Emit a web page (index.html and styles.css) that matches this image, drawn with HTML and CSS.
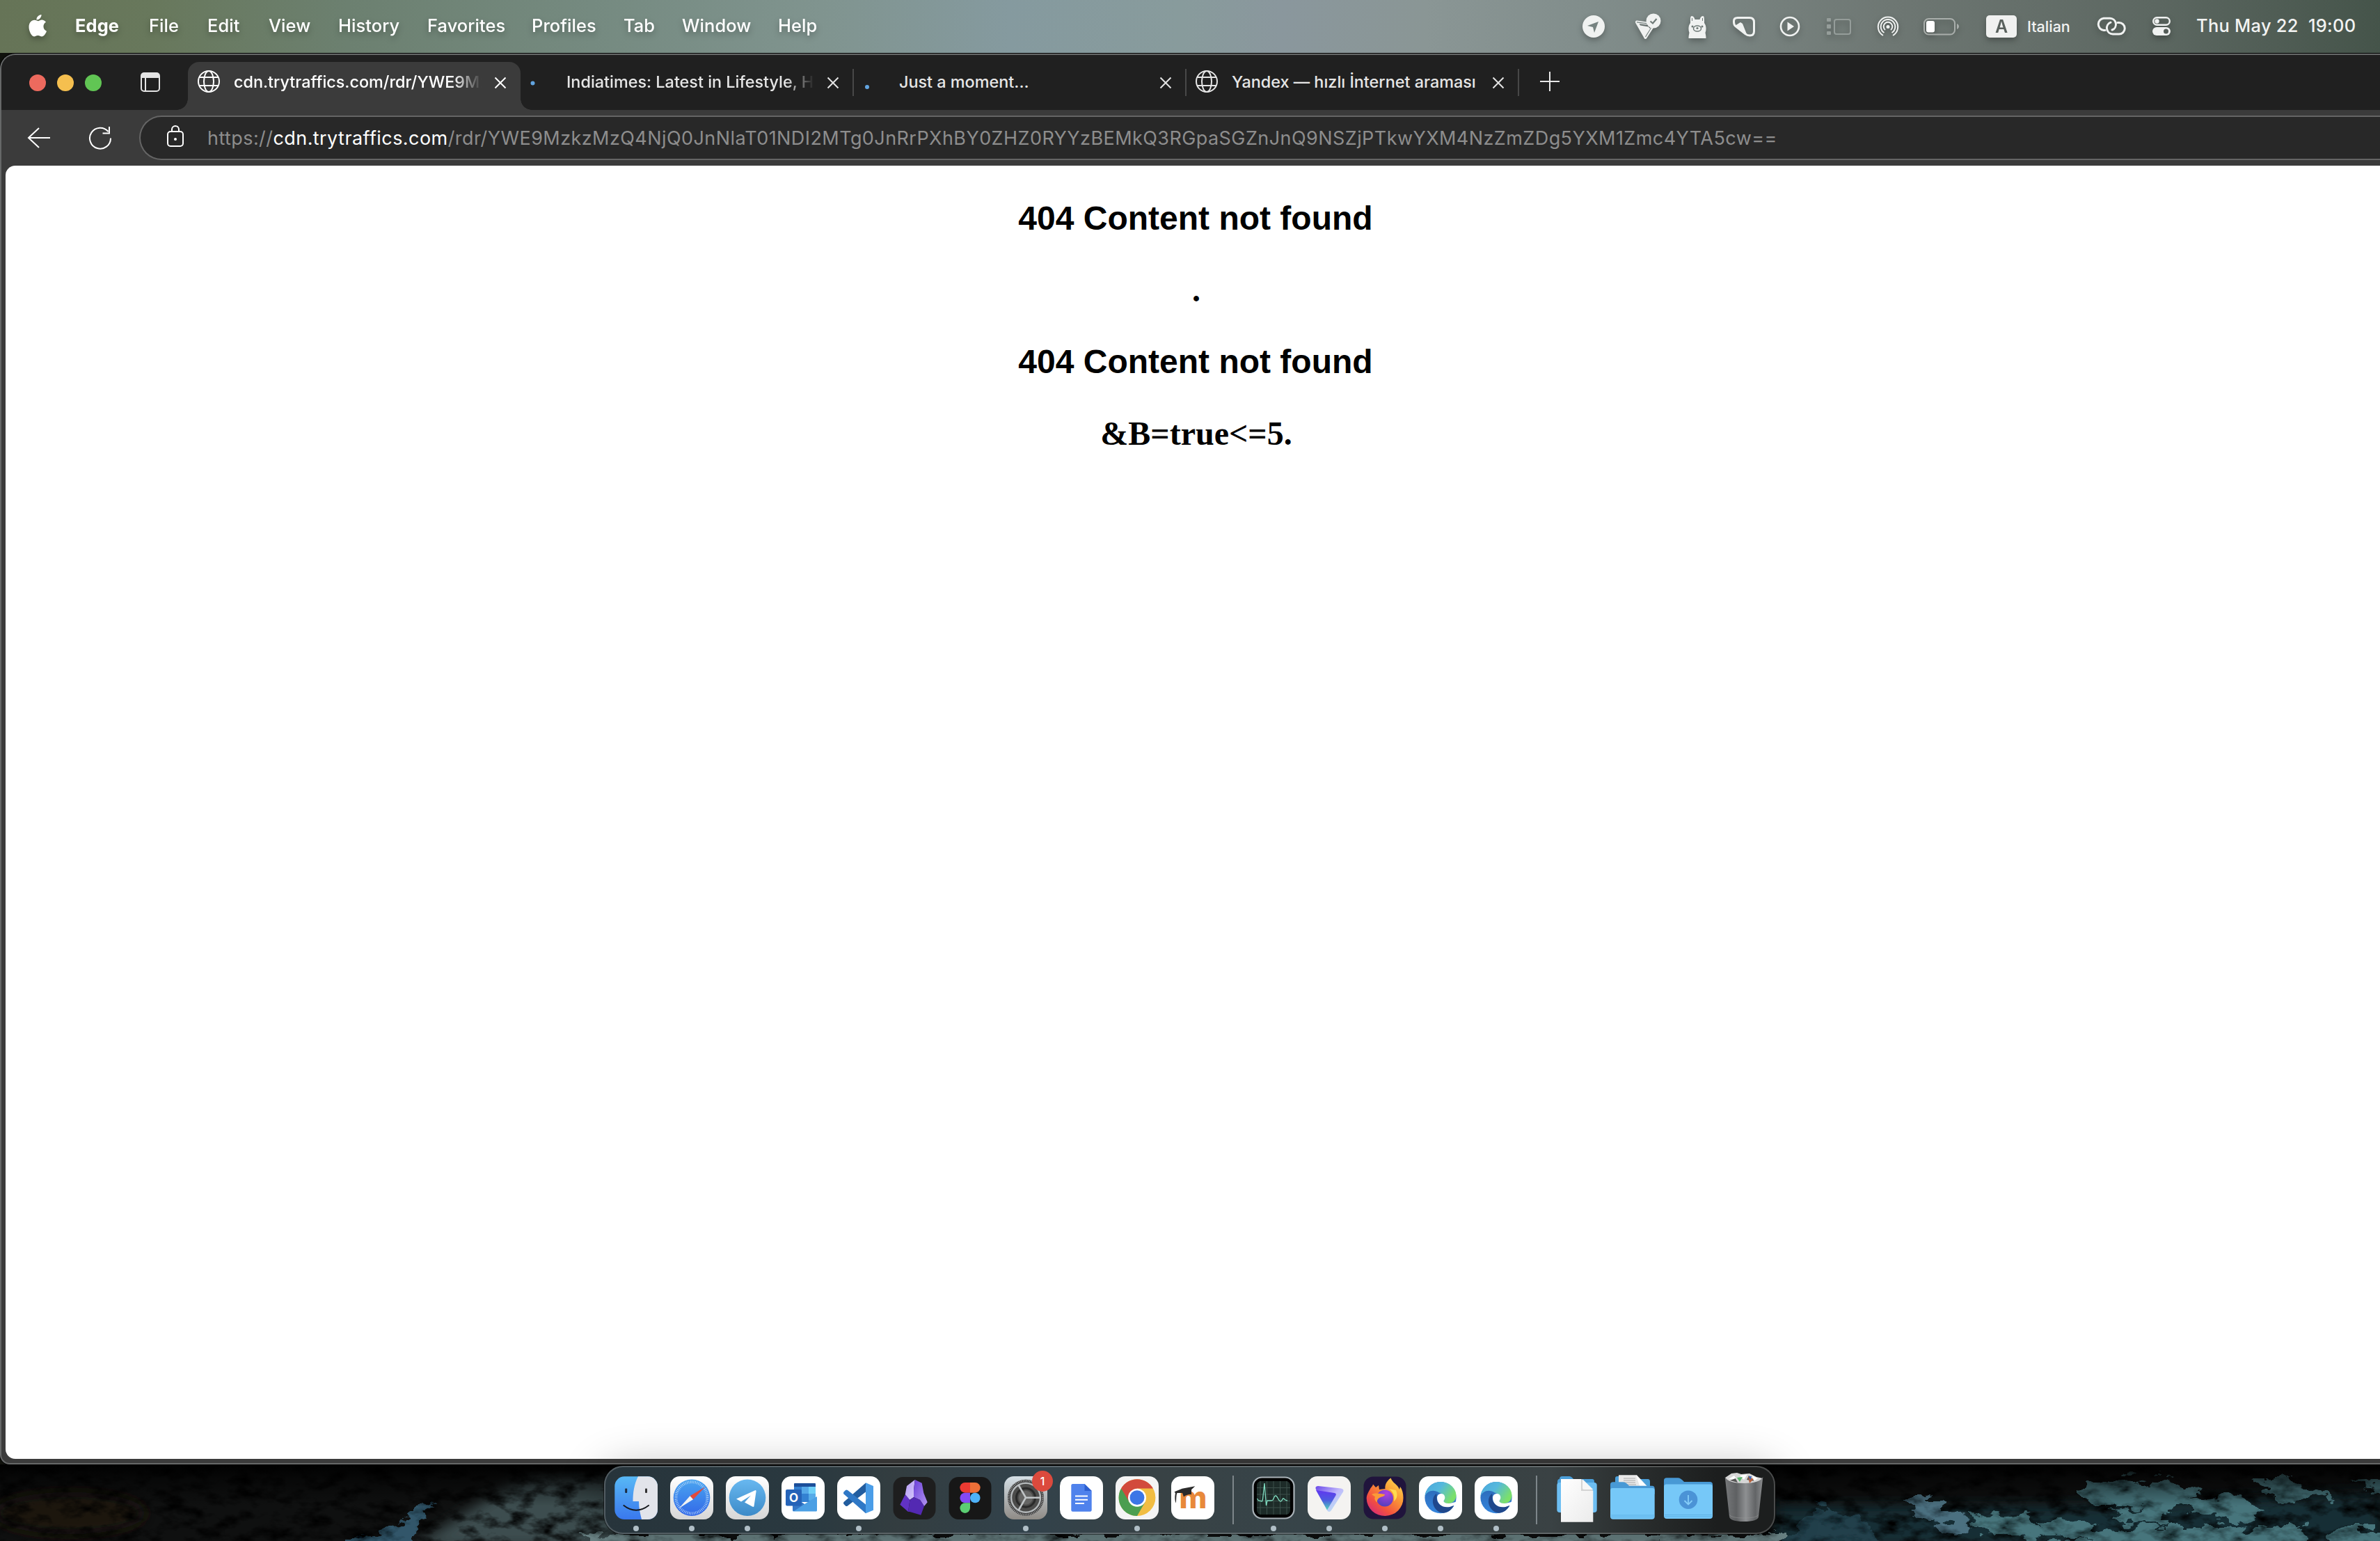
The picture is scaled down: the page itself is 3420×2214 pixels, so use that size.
FILE: index.html
```html
<!DOCTYPE html>
<html lang="en">
<head>
<meta charset="utf-8">
<title>404 Content not found</title>
<link rel="stylesheet" href="styles.css">
</head>
<body>
<svg width="0" height="0" class="defs">
  <defs>
    <linearGradient id="gFinder" x1="0" y1="0" x2="0" y2="1"><stop offset="0" stop-color="#5fc8f8"/><stop offset="1" stop-color="#2f62ea"/></linearGradient>
    <linearGradient id="gPale" x1="0" y1="0" x2="0" y2="1"><stop offset="0" stop-color="#fff"/><stop offset="1" stop-color="#d6d6d6"/></linearGradient>
    <linearGradient id="gSafari" x1="0" y1="0" x2="0" y2="1"><stop offset="0" stop-color="#4aa5f0"/><stop offset="1" stop-color="#3268e8"/></linearGradient>
    <linearGradient id="gTele" x1="0" y1="0" x2="0" y2="1"><stop offset="0" stop-color="#68b8f0"/><stop offset="1" stop-color="#3c8ac8"/></linearGradient>
    <linearGradient id="gSet" x1="0" y1="0" x2="0" y2="1"><stop offset="0" stop-color="#d5dfe6"/><stop offset="1" stop-color="#8f8b86"/></linearGradient>
    <linearGradient id="gProton" x1="0" y1="0" x2="0" y2="1"><stop offset="0" stop-color="#6038f0"/><stop offset=".5" stop-color="#4d5ae0"/><stop offset="1" stop-color="#50d8b8"/></linearGradient>
    <linearGradient id="gProton2" x1="0" y1="0" x2="1" y2="1"><stop offset="0" stop-color="#6a48e8"/><stop offset=".5" stop-color="#c0b8fc"/><stop offset="1" stop-color="#b8f6ee"/></linearGradient>
    <linearGradient id="gFox" x1="1" y1="0" x2=".2" y2="1"><stop offset="0" stop-color="#ffe755"/><stop offset=".4" stop-color="#fb9a35"/><stop offset=".75" stop-color="#f2503f"/><stop offset="1" stop-color="#d52a78"/></linearGradient>
    <radialGradient id="gFoxB" cx=".6" cy=".2" r=".9"><stop offset="0" stop-color="#b040e0"/><stop offset="1" stop-color="#4a3fb8"/></radialGradient>
    <linearGradient id="gEdgeT" x1="0" y1="0" x2="1" y2=".5"><stop offset="0" stop-color="#4aa8dc"/><stop offset=".5" stop-color="#55b8dd"/><stop offset="1" stop-color="#7be06a"/></linearGradient>
    <linearGradient id="gEdgeB" x1="0" y1="0" x2="0" y2="1"><stop offset="0" stop-color="#2a64b0"/><stop offset="1" stop-color="#3585dc"/></linearGradient>
    <linearGradient id="gTrash" x1="0" y1="0" x2="1" y2="0"><stop offset="0" stop-color="#77797b"/><stop offset=".3" stop-color="#5e6062"/><stop offset=".55" stop-color="#8e9092"/><stop offset=".8" stop-color="#626466"/><stop offset="1" stop-color="#8b8d8f"/></linearGradient>
    <linearGradient id="gPaper" x1="0" y1="0" x2="1" y2="1"><stop offset="0" stop-color="#fff"/><stop offset="1" stop-color="#ebebeb"/></linearGradient>
    <linearGradient id="gObsA" x1="0" y1="0" x2="1" y2="1"><stop offset="0" stop-color="#b69cf4"/><stop offset="1" stop-color="#d3c6fa"/></linearGradient>
    <linearGradient id="gObsB" x1="0" y1="0" x2="1" y2="1"><stop offset="0" stop-color="#6a3fd8"/><stop offset="1" stop-color="#b394f2"/></linearGradient>
    <filter id="rough" x="0" y="0" width="100%" height="100%">
      <feTurbulence type="fractalNoise" baseFrequency=".03 .055" numOctaves="4" seed="7" result="n"/>
      <feDisplacementMap in="SourceGraphic" in2="n" scale="40" xChannelSelector="R" yChannelSelector="G" result="d"/>
      <feColorMatrix in="n" type="matrix" values="0 0 0 0 0  0 0 0 0 0  0 0 0 0 0  2.400 0 0 0 -1.020" result="k"/>
      <feMerge><feMergeNode in="d"/><feMergeNode in="k"/></feMerge>
    </filter>
    <filter id="soft"><feGaussianBlur stdDeviation="10"/></filter>
    <linearGradient id="gShade" x1="0" y1="0" x2="0" y2="1"><stop offset="0" stop-color="#000" stop-opacity=".95"/><stop offset=".35" stop-color="#000" stop-opacity=".5"/><stop offset="1" stop-color="#000" stop-opacity="0"/></linearGradient>
    <g id="globe" fill="none" stroke="currentColor" stroke-width="2"><circle cx="16" cy="16" r="15"/><ellipse cx="16" cy="16" rx="7" ry="15"/><path d="M2.500 10h27M2.500 22h27"/></g>
    <g id="edgeLogo">
      <rect x="9" y="15" width="62" height="62" rx="14" fill="#fff"/>
      <circle cx="40" cy="45.700" r="22.600" fill="url(#gEdgeB)"/>
      <path d="M17.500 44C19 32 28 23 40 23c13 0 22.500 9.500 22.500 19.500 0 7-5 11.500-11.500 11.500-4 0-6.500-1.200-6.500-2.800 0-1.200 1.300-1.800 1.300-4.700 0-4-4-7-8-8C30 33 20 36 17.500 44z" fill="url(#gEdgeT)"/>
      <path d="M34 40c-7 5-7 18 2 25 8 5.500 17 2 22.500-6.500.8-1.200 0-2-1.200-1.500-10 4.500-22 0-22.800-10.500-.2-3 .5-4.500-.5-6.500z" fill="#20488c"/>
      <path d="M35 46c0-4 3-6 6-6 3.500 0 5.500 3 5.300 5.800-.2 3-1.800 3.800-1.800 5.200 1 3 7 3.700 12 2.200l8-2-3 5-4 1.200C47 62.500 35 57 35 46z" fill="#fff"/>
    </g>
  </defs>
</svg>

<header class="menubar">
  <svg class="apple" width="30" height="76" viewBox="0 0 30 76"><path fill="#fff" d="M19.500 21c.3 4-3.500 7.800-7 7.500C12 24.800 15.800 21.300 19.500 21zM20 28.600c2.400 0 4.700 1.300 6 3.200-5.200 3-4.400 10.800 1 12.900-1.300 3.700-4 7.700-6.900 7.700-2.200 0-3-1.400-5.600-1.400-2.700 0-3.500 1.400-5.600 1.400C5.500 52.300 1.500 45 1.500 38.700c0-6.300 4-10 8-10 2.400 0 4.100 1.500 5.600 1.500 1.400 0 3.100-1.600 4.900-1.600z"/></svg>
  <nav class="menus">
    <b class="m-edge">Edge</b><span class="m-file">File</span><span class="m-edit">Edit</span><span class="m-view">View</span><span class="m-history">History</span><span class="m-favorites">Favorites</span><span class="m-profiles">Profiles</span><span class="m-tab">Tab</span><span class="m-window">Window</span><span>Help</span>
  </nav>
  <div class="status">
    <svg width="70" height="76" viewBox="2260 0 70 76"><circle cx="2290" cy="38" r="16" fill="#f0f2f1"/><path d="M2281 37l16-6-6 16-2-8z" fill="#768381"/></svg>
    <svg width="70" height="76" viewBox="2330 0 70 76"><path d="M2352 31.500l14 2M2352 32l12.500 22 9-14" fill="none" stroke="#f0f2f1" stroke-width="4" stroke-linejoin="round" stroke-linecap="round"/><path d="M2352 31.800l15 2M2364.500 53l8-13" stroke="#75817f" stroke-width="1.200"/><path d="M2354 36l15 2.500 2 3-7 10z" fill="#f0f2f1"/><circle cx="2376" cy="30" r="10.500" fill="#f0f2f1"/><path d="M2371.500 30.500l3.500 3 5.500-6.500" fill="none" stroke="#6f7b78" stroke-width="2.200"/></svg>
    <svg width="70" height="76" viewBox="2400 0 70 76"><path fill="#f0f2f1" d="M2426.500 55c0-4 .5-5 1-8-2-5-1-11 1.500-14 0-4-.5-10 2-10s4 3 4.500 5h7c.5-2 2-5 4.500-5s2 6 2 10c2.500 3 3.500 9 1.500 14 .5 3 1 4 1 8z"/><ellipse cx="2439" cy="41" rx="5.500" ry="4" fill="none" stroke="#6d7875" stroke-width="1.500"/><circle cx="2439" cy="40.500" r="1.600" fill="#6d7875"/><circle cx="2432" cy="38" r="1.500" fill="#6d7875"/><circle cx="2446" cy="38" r="1.500" fill="#6d7875"/><path d="M2431.500 26v4M2446.500 26v4" stroke="#6d7875"/></svg>
    <svg width="75" height="76" viewBox="2470 0 75 76"><path d="M2497 25.500h17q6.500 0 6.500 6.500v13q0 6-6 6-4 0-6-2l-14-11q-3-2-3-6v-2q0-4.500 5.500-4.500z" fill="none" stroke="#f0f2f1" stroke-width="3"/><path d="M2493 37l8-5 3 2 6 15z" fill="#f0f2f1"/></svg>
    <svg width="55" height="76" viewBox="2545 0 55 76"><circle cx="2572" cy="38" r="13" fill="none" stroke="#f0f2f1" stroke-width="2.600"/><path d="M2568.500 31.500v13l9.500-6.500z" fill="#f0f2f1"/></svg>
    <svg width="80" height="76" viewBox="2600 0 80 76"><g fill="#959d9a"><rect x="2625" y="26" width="6" height="5" rx="1"/><rect x="2625" y="35" width="6" height="6" rx="1"/><rect x="2625" y="45" width="6" height="5" rx="1"/></g><rect x="2636" y="28" width="23" height="21" rx="3" fill="none" stroke="#959d9a" stroke-width="2"/></svg>
    <svg width="65" height="76" viewBox="2680 0 65 76"><g fill="none" stroke="#f0f2f1" stroke-width="2"><path d="M2706 51a14.200 14.200 0 1 1 14 0M2707.500 47a10.300 10.300 0 1 1 11 0M2709 43a6.300 6.300 0 1 1 8 0"/></g><circle cx="2713" cy="38.500" r="2.500" fill="#f0f2f1"/></svg>
    <svg width="90" height="76" viewBox="2745 0 90 76"><rect x="2765" y="27" width="44" height="22.500" rx="6.500" fill="none" stroke="#a9aeab" stroke-width="2"/><rect x="2768" y="30" width="12" height="16.500" rx="3" fill="#fff"/><path d="M2812 34c4 2 4 6 0 8z" fill="#a9aeab"/></svg>
    <span class="lang-key">A</span>
    <span class="lang">Italian</span>
    <svg width="85" height="76" viewBox="2990 0 85 76"><g fill="none" stroke="#f0f2f1" stroke-width="3" stroke-linecap="round"><path d="M3025 43.500h-2a8.700 8.700 0 0 1 0-17.300h9a8.700 8.700 0 0 1 3 16.800"/><path d="M3043 32.500h2a8.200 8.200 0 0 1 0 16.500h-9a8.700 8.700 0 0 1-3-16.800"/></g></svg>
    <svg width="60" height="76" viewBox="3075 0 60 76"><rect x="3094.200" y="25.200" width="23.600" height="10.600" rx="5.300" fill="none" stroke="#f0f2f1" stroke-width="2.400"/><circle cx="3099.500" cy="30.500" r="3.200" fill="#f0f2f1"/><rect x="3093" y="39" width="26" height="12" rx="6" fill="#f0f2f1"/><circle cx="3112.500" cy="45" r="3.500" fill="#535c57"/></svg>
    <span class="clock">Thu May 22&nbsp; 19:00</span>
  </div>
</header>

<main class="window">
  <div class="tabstrip">
    <div class="lights"><i class="red"></i><i class="amber"></i><i class="green"></i></div>
    <svg class="layout-icon" width="28" height="28" viewBox="0 0 28 28"><rect x="1" y="1" width="26" height="26" rx="4" fill="none" stroke="#e4e4e4" stroke-width="2"/><path d="M1 8V4q0-3 3-3h20q3 0 3 3v4zM6 8h2v19H6z" fill="#e4e4e4"/></svg>
    <div class="tab active">
      <svg class="fav" width="32" height="32"><use href="#globe"/></svg>
      <span class="title t1">cdn.trytraffics.com/rdr/YWE9Mz</span>
      <svg class="close" width="18" height="18"><path d="M1.500 1.500l15 15M16.500 1.500l-15 15" stroke="#fff" stroke-width="2"/></svg>
    </div>
    <div class="tab sep">
      <svg class="fav" width="32" height="32"><circle cx="3.500" cy="18.500" r="3" fill="#62a4e0"/></svg>
      <span class="title t2">Indiatimes: Latest in Lifestyle, H</span>
      <svg class="close" width="18" height="18"><path d="M1.500 1.500l15 15M16.500 1.500l-15 15" stroke="#e4e4e4" stroke-width="2"/></svg>
    </div>
    <div class="tab sep">
      <svg class="fav" width="32" height="32"><circle cx="6" cy="24" r="3" fill="#62a4e0"/></svg>
      <span class="title t3">Just a moment...</span>
      <svg class="close" width="18" height="18"><path d="M1.500 1.500l15 15M16.500 1.500l-15 15" stroke="#e4e4e4" stroke-width="2"/></svg>
    </div>
    <div class="tab sep">
      <svg class="fav" width="32" height="32"><use href="#globe"/></svg>
      <span class="title t4">Yandex — hızlı İnternet araması</span>
      <svg class="close" width="18" height="18"><path d="M1.500 1.500l15 15M16.500 1.500l-15 15" stroke="#e4e4e4" stroke-width="2"/></svg>
    </div>
    <svg class="plus" width="28" height="28"><path d="M14 0v28M0 14h28" stroke="#e8e8e8" stroke-width="2"/></svg>
  </div>

  <div class="toolbar">
    <svg class="back" width="34" height="32" viewBox="0 0 34 32"><path d="M33 16H2M17 2L2 16l15 14" fill="none" stroke="#fff" stroke-width="2"/></svg>
    <svg class="reload" width="34" height="34" viewBox="0 0 34 34"><path d="M32 17.500A15 15 0 1 1 28.500 8M30 1v9.500h-9.500" fill="none" stroke="#fff" stroke-width="2"/></svg>
    <div class="address">
      <svg class="lock" width="24" height="32" viewBox="0 0 24 32"><rect x="1" y="9" width="22" height="21" rx="4" fill="none" stroke="#fff" stroke-width="2"/><path d="M7 9V6a5 5 0 0 1 10 0v3" fill="none" stroke="#fff" stroke-width="2"/><circle cx="12" cy="20" r="2" fill="#fff"/></svg>
      <div class="url"><span>https://</span><span class="host">cdn.trytraffics.com</span><span class="path">/rdr/YWE9MzkzMzQ4NjQ0JnNlaT01NDI2MTg0JnRrPXhBY0ZHZ0RYYzBEMkQ3RGpaSGZnJnQ9NSZjPTkwYXM4NzZmZDg5YXM1Zmc4YTA5cw==</span></div>
    </div>
  </div>

  <section class="page">
    <h2 class="sans">404 Content not found</h2>
    <h2>.</h2>
    <h2 class="sans">404 Content not found</h2>
    <h2>&amp;B=true&lt;=5.</h2>
  </section>
</main>

<footer class="desktop">
  <svg class="rocks" width="3420" height="110" viewBox="0 0 3420 110" preserveAspectRatio="none">
    <rect width="3420" height="110" fill="#0f1010"/>
    <g filter="url(#soft)"><ellipse cx="100" cy="70" rx="110" ry="30" fill="#1d1711"/><path d="M590 120L700 50 760 20H900V120z" fill="#3d4d50"/><path d="M2550 60h400l470-20v80H2550z" fill="#172e35"/></g>
    <g filter="url(#rough)">
      <rect width="3420" height="110" fill="none"/>
      <path d="M500 104l50-6 60-40 20-4-40 50-20 20H480z" fill="#31566a"/>
      <path d="M840 104l50-6 1670 0v24H830z" fill="#6d8688"/>
      <path d="M2560 110l60-50 50 14 40 50h-150z" fill="#24404c"/>
      <path d="M2740 50l50 0 40 40-10 10-60-20z" fill="#4c6f80"/>
      <path d="M2830 66l80 10 50 30-120-10zM2930 80l80 6 40 20-110-4zM2980 30l130-10 60 20-60 26-100-8zM3040 70l70-8 10 24-70 2zM3090 54l120-10 40 20-20 20zM2920 118l190-30 90 0 60 10-20 30H2920zM3250 90l60 0 10 30h-70zM3330 118l40-30 70 0v40h-110zM3230 24l60 0 60 20-60 10zM3380 30l60-6v20z" fill="#46747c"/>
    </g>
    <rect width="3420" height="60" fill="url(#gShade)"/>
  </svg>

  <div class="dock">
    <svg class="app" viewBox="0 0 80 98"><clipPath id="c1"><rect x="9.300" y="15.300" width="61.700" height="61.700" rx="14"/></clipPath><g clip-path="url(#c1)"><rect width="80" height="98" fill="url(#gFinder)"/><path d="M43 15c-6 12-7.500 24-7.500 36h8.500c0 10 2 18 4 26h24V15z" fill="#e2e4ea"/></g><rect x="24.200" y="32.500" width="3" height="6.500" rx="1" fill="#1c2a40"/><rect x="53" y="32.500" width="3" height="6.500" rx="1" fill="#333"/><path d="M21.700 56.500Q40 71 58.700 56.500" fill="none" stroke="#15181c" stroke-width="1.800"/><circle class="run" cx="40" cy="90" r="4"/></svg>
    <svg class="app" viewBox="0 0 80 98"><rect x="9" y="15" width="62" height="62" rx="14" fill="url(#gPale)"/><circle cx="40" cy="45.700" r="26.300" fill="url(#gSafari)"/><circle cx="40" cy="45.700" r="22.500" fill="none" stroke="#bfdcf8" stroke-width="4" stroke-dasharray=".8 1.600"/><path d="M59.300 30.300L37.500 43.200l4.500 5z" fill="#e2493b"/><path d="M21.700 61L37.500 43.200l4.500 5z" fill="#f2f2f2"/><circle class="run" cx="40" cy="90" r="4"/></svg>
    <svg class="app" viewBox="0 0 80 98"><rect x="9" y="15" width="62" height="62" rx="14" fill="url(#gPale)"/><circle cx="40" cy="45.700" r="26.300" fill="url(#gTele)"/><path d="M24 47.500L51 35.200q1.700-.6 1.600 1.400L49.500 58q-.5 1.800-2.500.6L36 52.500l9-10-14 9z" fill="#fff"/><circle class="run" cx="40" cy="90" r="4"/></svg>
    <svg class="app" viewBox="0 0 80 98"><rect x="9" y="15" width="62" height="62" rx="14" fill="#fff"/><rect x="27" y="25" width="31" height="8" rx="1" fill="#1c4f9a"/><path d="M27 30h31v22H27z" fill="#3381d2"/><path d="M38 30h10v10H38z" fill="#55a8e8"/><path d="M48 30h10v10H48z" fill="#6fd0f8"/><path d="M48 40h10v10H48z" fill="#56abe9"/><path d="M25 44l17 11 18-11v20q0 1.500-1.500 1.500h-32q-1.500 0-1.500-1.500z" fill="#4b9fe4"/><path d="M25 44l17 11-15 10q-2 0-2-2z" fill="#3577c6"/><rect x="15" y="34" width="23" height="23.500" rx="2" fill="#2563b8"/><text x="26.500" y="51.500" class="outlook-o">O</text></svg>
    <svg class="app" viewBox="0 0 80 98"><rect x="9" y="15" width="62" height="62" rx="14" fill="#fff"/><path d="M50 24.500v13L24 57.500q-1.500 1-3 0l-2.500-2.500q-1.200-1.500 0-3z" fill="#225d9f"/><path d="M50 68.300V55.500L24 35q-1.500-1-3 0l-2.500 2.500q-1.200 1.500 0 3z" fill="#2f78c6"/><path d="M50 24.300l11 4.700v34.700l-11 4.600z" fill="#4a9de8"/><circle class="run" cx="40" cy="90" r="4"/></svg>
    <svg class="app" viewBox="0 0 80 98"><rect x="9.500" y="16" width="61" height="61" rx="14" fill="#1e1e1e"/><path d="M40.700 20l-11.700 9-2.300 12.300L33 49l6-4V35z" fill="url(#gObsA)"/><path d="M40.700 20l10 4.700L53.300 39l5.400 13.300L54 58l-6-9-9-4V35z" fill="url(#gObsB)"/><path d="M26.700 41.300L19.300 55.700 31 66l2.500-17z" fill="#6132c4"/><path d="M33.500 49l5.500-4 9 4 6 9-4.700 12.700-16-4.700-2.300 0z" fill="#5329b2"/></svg>
    <svg class="app" viewBox="0 0 80 98"><rect x="9.500" y="16" width="61" height="61" rx="14" fill="#171717"/><path d="M40 24v14.700h-7.300a7.350 7.350 0 0 1 0-14.700z" fill="#ea3a32"/><path d="M40 24h7.300a7.350 7.350 0 0 1 0 14.700H40z" fill="#ed7038"/><path d="M40 38.700v14.600h-7.300a7.300 7.300 0 0 1 0-14.600z" fill="#8449f4"/><circle cx="47.300" cy="46" r="7.300" fill="#4eb2f8"/><path d="M40 53.300v7.300a7.300 7.300 0 1 1-7.300-7.300z" fill="#5bcd72"/></svg>
    <svg class="app" viewBox="0 0 80 98"><rect x="9" y="15" width="62" height="62" rx="14" fill="url(#gSet)"/><circle cx="40" cy="45.700" r="26" fill="#333"/><circle cx="40" cy="45.700" r="24.500" fill="none" stroke="#999" stroke-width="3" stroke-dasharray="1.200 1.200"/><circle cx="40" cy="45.700" r="21" fill="#4c4c4b" stroke="#b4b8ba" stroke-width="2.500"/><circle cx="40" cy="45.700" r="13.500" fill="none" stroke="#2a2a2a" stroke-width="3"/><circle cx="40" cy="45.700" r="10" fill="#656564"/><path d="M61 45.700H40L29.500 27.500M40 45.700L29.500 64" fill="none" stroke="#c0c4c6" stroke-width="2.600"/><circle cx="64" cy="22" r="15" fill="#dc4a3d"/><text x="64" y="27.500" class="badge">1</text><circle class="run" cx="40" cy="90" r="4"/></svg>
    <svg class="app" viewBox="0 0 80 98"><rect x="9" y="15" width="62" height="62" rx="14" fill="#fff"/><path d="M27.500 26h17l10.200 10v27.500q0 2.200-2.200 2.200h-25q-2.200 0-2.200-2.200V28.200q0-2.200 2.200-2.200z" fill="#4f82ec"/><path d="M44.500 26l10.200 10H44.500z" fill="#2c5fd0"/><path d="M31 43.500h18M31 48.800h18M31 54h13" stroke="#fff" stroke-width="2"/></svg>
    <svg class="app" viewBox="0 0 80 98"><rect x="9" y="15" width="62" height="62" rx="14" fill="#f4f4f4"/><circle cx="40" cy="45.700" r="26.400" fill="#f1bd42"/><path d="M40 45.700L17.100 32.500a26.400 26.400 0 0 0 22.900 39.600l11.400-19.800z" fill="#4b9e50"/><path d="M40 45.700L17.100 32.500a26.400 26.400 0 0 1 45.800 0H40z" fill="#d24a3c"/><path d="M17.100 32.500l12 20 11-20z" fill="#d24a3c"/><circle cx="40" cy="45.700" r="13" fill="#fff"/><circle cx="40" cy="45.700" r="10.400" fill="#3b76e6"/><circle class="run" cx="40" cy="90" r="4"/></svg>
    <svg class="app" viewBox="0 0 80 98"><rect x="9" y="15" width="62" height="62" rx="14" fill="#fff"/><text x="40.500" y="60.500" class="moodle-m">m</text><path d="M13.700 37.300l11-4.500 18.600-3.500-5.300 5v7c-3-1-8 .5-11 3.200l-2-5.500-7.500 0c-1.500 3-1 8-1.700 14.500-1.500-3-2-9-.8-14z" fill="#2b2b2b"/></svg>
    <i class="divider"></i>
    <svg class="app" viewBox="0 0 80 98"><rect x="10.500" y="16.500" width="59" height="59" rx="13" fill="#000" stroke="#a9b2b8" stroke-width="2.200"/><rect x="16" y="22" width="48" height="48" rx="6" fill="#1d2b28"/><path d="M16 31.500h48M16 41h48M16 50.500h48M16 60h48M21 22v48M30.500 22v48M40 22v48M49.500 22v48M59 22v48" stroke="#3c504b"/><path d="M16.500 47l2 3 5 1 1-3 2.500-23 2.500 32 1.500-7 6 0c4 0 3-7 6-7s4 8 7 8 2-4 4-4 2 3 6 3" fill="none" stroke="#7fdcc0" stroke-width="1.300"/><circle class="run" cx="40" cy="90" r="4"/></svg>
    <svg class="app" viewBox="0 0 80 98"><rect x="9" y="15" width="62" height="62" rx="14" fill="#f4f3f1"/><path d="M24 29l33 3.500q5 1 3 5L43 64q-3 4-6 0L21 34q-2-4.500 3-5z" fill="url(#gProton2)"/><path d="M21 35l26.500 4q3.500.8 1.800 3.800L37 63.500z" fill="url(#gProton)"/><circle class="run" cx="40" cy="90" r="4"/></svg>
    <svg class="app" viewBox="0 0 80 98"><rect x="9.500" y="15.500" width="61" height="61" rx="14" fill="#20143c"/><path d="M48.500 17.500C41 23 40 29 40.500 33L32 34l-1-6-4 3-4-4.500c-.5 3-3 4-4.500 7.500C15 40 13.700 43 13.700 47a26.400 25.500 0 0 0 52.800-1c0-6-1.500-12-4.500-16l-1 4c-3-8-10-9-12.500-16.500z" fill="url(#gFox)"/><circle cx="40" cy="46.500" r="12" fill="url(#gFoxB)"/><path d="M21 41c6-3 12-1 19 0 0 3-4 3-7 4.500-2 1-4.500 3-4 7-2-1-5-5-3-8z" fill="#fa9a38"/><path d="M45 33c5 2 10 8 8 18 6-5 5-11 3-16z" fill="#ffdc4f"/><circle class="run" cx="40" cy="90" r="4"/></svg>
    <svg class="app" viewBox="0 0 80 98"><use href="#edgeLogo"/><circle class="run" cx="40" cy="90" r="4"/></svg>
    <svg class="app" viewBox="0 0 80 98"><use href="#edgeLogo"/><circle class="run" cx="40" cy="90" r="4"/></svg>
    <i class="divider"></i>
    <svg class="app" viewBox="0 0 80 98"><path d="M15 19q0-4 4-4h10q3 0 6 4h27q3 0 3 4v10H12v-10q0-4 3-4z" fill="#4b9fd9"/><rect x="11.300" y="24" width="57.400" height="43" rx="4" fill="#6dbef2"/><path d="M17 19h29l17.300 17v44.700H17z" fill="url(#gPaper)"/><path d="M46 19l17.300 17H46z" fill="#d4d4d4"/><path d="M48 19l15.300 15H50q-2 0-2-2z" fill="#f7f7f7"/></svg>
    <svg class="app" viewBox="0 0 80 98"><path d="M15 18q0-3 3-3h6l10 4h28q3 0 3 4v10H15z" fill="#4b9fd9"/><path d="M20 13.300h26l14 15V34H20z" fill="#e9e9e9"/><path d="M27 18h17M27 21h17M27 24h17M27 27h18" stroke="#aaa"/><path d="M45 13.300l15 15.500H50z" fill="#fff"/><path d="M8 27q0-3.700 4-3.700h14q4 0 9 5.400h33q3.700 0 3.700 4v8H8z" fill="#4899d5"/><path d="M8 35q0-3 3-3h57.700q3 0 3 3v38q0 3.700-4 3.700H12q-4 0-4-3.700z" fill="#76c8f8"/><path d="M9 71h62M9 73.500h62" stroke="#5fb2e6"/></svg>
    <svg class="app" viewBox="0 0 80 98"><path d="M5 21q0-3.700 4-3.700h16q4 0 9 5.700h37q4 0 4 4v10H5z" fill="#4899d5"/><path d="M5 30q0-3.500 3.500-3.500h63q3.500 0 3.500 3.500v42q0 4-4 4H9q-4 0-4-4z" fill="#76c8f8"/><path d="M6 70.500h68M6 73h68" stroke="#5fb2e6"/><circle cx="40" cy="48.700" r="13.300" fill="#4b93d6"/><path d="M40 42v13M34.500 50l5.500 5.500 5.500-5.500" fill="none" stroke="#85cdf8" stroke-width="1.800"/></svg>
    <svg class="app" viewBox="0 0 80 98"><path d="M13 17l9-6 8-1 6 2 12-1 10 5 9 2-6 8H18z" fill="#d6d6d6"/><path d="M18 19l8-5 4 6zM34 14l6 6 5-8zM52 14l8 4-6 4z" fill="#fff"/><path d="M20 21l8-3 3 6zM44 20l3-6 8 8z" fill="#555"/><path d="M30 17l8-1-4 7z" fill="#57b66a"/><path d="M46 16l8 3-6 6z" fill="#b9603a"/><path d="M47 15l4 0-2 6z" fill="#3a62b8"/><path d="M12.700 16l6.300 57q1 7 21 7t21-7l6.300-57c-3 6-12 9-27.300 9s-24-3-27.300-9z" fill="url(#gTrash)"/><path d="M19 70q2 5 21 5t21-5" fill="none" stroke="#9a9a9a" opacity=".5"/></svg>
  </div>
</footer>
</body>
</html>
```
FILE: styles.css
```css
* { box-sizing: border-box; }
html, body { margin: 0; width: 3420px; height: 2214px; overflow: hidden; }
body { display: flex; flex-direction: column; background: #10110c; font-family: Inter, "Liberation Sans", sans-serif; }
svg { display: block; flex: none; }
.defs { position: absolute; }

/* Menu bar */
.menubar {
  flex: none; height: 76px; display: flex; align-items: center; color: #fff; padding-left: 40px;
  background: linear-gradient(90deg, #667457 0, #68785c 220px, #6c8070 500px, #758a80 850px, #80948f 1180px, #859a9f 1450px, #889b9c 1700px, #8a979d 1840px, #8a9695 2050px, #818d8b 2290px, #6e7773 2720px, #5c6761 3100px, #45544a 3420px);
}
.apple, .menus, .status svg, .lang-key { filter: drop-shadow(0 4px 4px rgba(0,0,0,.28)); }
.menus { display: flex; margin-left: 38px; padding-bottom: 2px; font-size: 25.4px; line-height: 74px; white-space: nowrap; font-weight: 500; letter-spacing: .1px; }
.menus > * { flex: none; }
.menus b { font-weight: 700; }
.m-edge { width: 106px; } .m-file { width: 84px; } .m-edit { width: 88px; } .m-view { width: 100px; }
.m-history { width: 128px; } .m-favorites { width: 150px; } .m-profiles { width: 132px; }
.m-tab { width: 84px; } .m-window { width: 138px; }
.status { margin-left: auto; width: 1160px; flex: none; display: flex; align-items: center; white-space: nowrap; color: #f2f3f2; }
.lang-key { margin-left: 19px; width: 44px; height: 32px; border-radius: 5px; background: #f0f1f0; color: #59615d; font-size: 25px; font-weight: 600; line-height: 32px; text-align: center; }
.lang { margin-left: 15px; width: 77px; font-size: 21.500px; font-weight: 500; line-height: 76px; }
.clock { margin-left: 21px; padding-bottom: 2px; font-size: 25.400px; font-weight: 500; line-height: 74px; letter-spacing: .3px; }

/* Browser window */
.window {
  flex: none; height: 2027px; margin-top: 1px; display: flex; flex-direction: column; background: #3b3b3b;
  border: 2px solid #666868; border-right: 0; border-radius: 22px 0 0 14px; overflow: hidden;
  box-shadow: 0 0 0 1px #000;
}
.tabstrip { flex: none; height: 79px; padding-top: 10px; background: #202020; display: flex; }
.lights { display: flex; gap: 16px; padding: 18px 0 0 40px; width: 200px; }
.lights i { width: 24px; height: 24px; border-radius: 50%; }
.red { background: #ed6a5e; } .amber { background: #f5bf4f; } .green { background: #61c554; }
.layout-icon { margin: 15px 40px 0 0; }
.tab { position: relative; flex: none; width: 478px; height: 69px; padding: 0 20px 0 14px; display: flex; align-items: center; color: #e6e6e6; }
.tab.active { background: #3b3b3b; border-radius: 16px 16px 0 0; color: #fff; }
.tab.active::before, .tab.active::after { content: ""; position: absolute; bottom: 0; width: 16px; height: 16px; }
.tab.active::before { left: -16px; background: radial-gradient(circle at 0 0, transparent 15.500px, #3b3b3b 16px); }
.tab.active::after { right: -16px; background: radial-gradient(circle at 100% 0, transparent 15.500px, #3b3b3b 16px); }
.tab.sep::after { content: ""; position: absolute; right: -1px; top: 10px; width: 2px; height: 39px; background: #484848; }
.fav { margin-bottom: 13px; }
.title { margin: 0 0 11px 20px; width: 356px; font-size: 23.400px; line-height: 32px; font-weight: 500; white-space: nowrap; overflow: hidden; }
.t1, .t2 { -webkit-mask-image: linear-gradient(90deg, #000 315px, transparent 356px); mask-image: linear-gradient(90deg, #000 315px, transparent 356px); }
.close { margin: 0 0 10px 18px; }
.plus { margin: 14px 0 0 31px; }

.toolbar { flex: none; height: 80px; display: flex; align-items: center; padding-left: 37px; }
.reload { margin-left: 54px; }
.address { margin-left: 39px; flex: 1; height: 64px; border: 2px solid #656565; border-right: 0; border-radius: 32px 0 0 32px; background: #282828; display: flex; align-items: center; padding-left: 38px; }
.lock { margin-bottom: 4px; }
.url { margin-left: 34px; padding-top: 2px; font-size: 27px; line-height: 58px; letter-spacing: .43px; white-space: nowrap; color: #8d8d8d; display: flex; }
.host { color: #fff; }

.page { flex: none; height: 1858px; margin-left: 6px; width: 3420px; background: #fff; border-radius: 14px 0 0 14px; padding-top: 24px; display: flex; flex-direction: column; }
.page h2 { margin: 0; padding-left: 2px; height: 103px; line-height: 103px; font-size: 48px; font-weight: 700; text-align: center; color: #000; font-family: "Liberation Serif", serif; }
.page h2.sans { padding-left: 0; font-family: "Liberation Sans", sans-serif; }

/* Desktop and dock */
.desktop { flex: none; height: 110px; display: grid; justify-items: start; }
.desktop > * { grid-area: 1 / 1; }
.dock {
  z-index: 1; margin: 2px 0 0 868px; width: 1683px; height: 98px; padding-left: 6px; border-radius: 27px; display: flex;
  background: linear-gradient(90deg, #27343b 0, #2a3940 300px, #333d40 420px, #32424b 600px, #384245 800px, #374449 1000px, #354042 1150px, #3a4244 1360px, #2a2e2e 1480px, #1c1e1e 1600px);
  box-shadow: inset 0 0 0 2px rgba(255,255,255,.2), 0 0 0 1px rgba(0,0,0,.5), 0 6px 64px rgba(0,0,0,.3);
}
.app { width: 80px; height: 98px; overflow: visible; }
.run { fill: #b0bec6; }
.divider { flex: none; width: 2px; height: 70px; margin: 14px 17px 0; background: #7d868a; }
.outlook-o { font: 700 17px Inter, sans-serif; fill: #fff; text-anchor: middle; }
.badge { font: 500 16px Inter, sans-serif; fill: #fff; text-anchor: middle; }
.moodle-m { font: 800 43px Inter, sans-serif; fill: #e8893a; text-anchor: middle; }
```
